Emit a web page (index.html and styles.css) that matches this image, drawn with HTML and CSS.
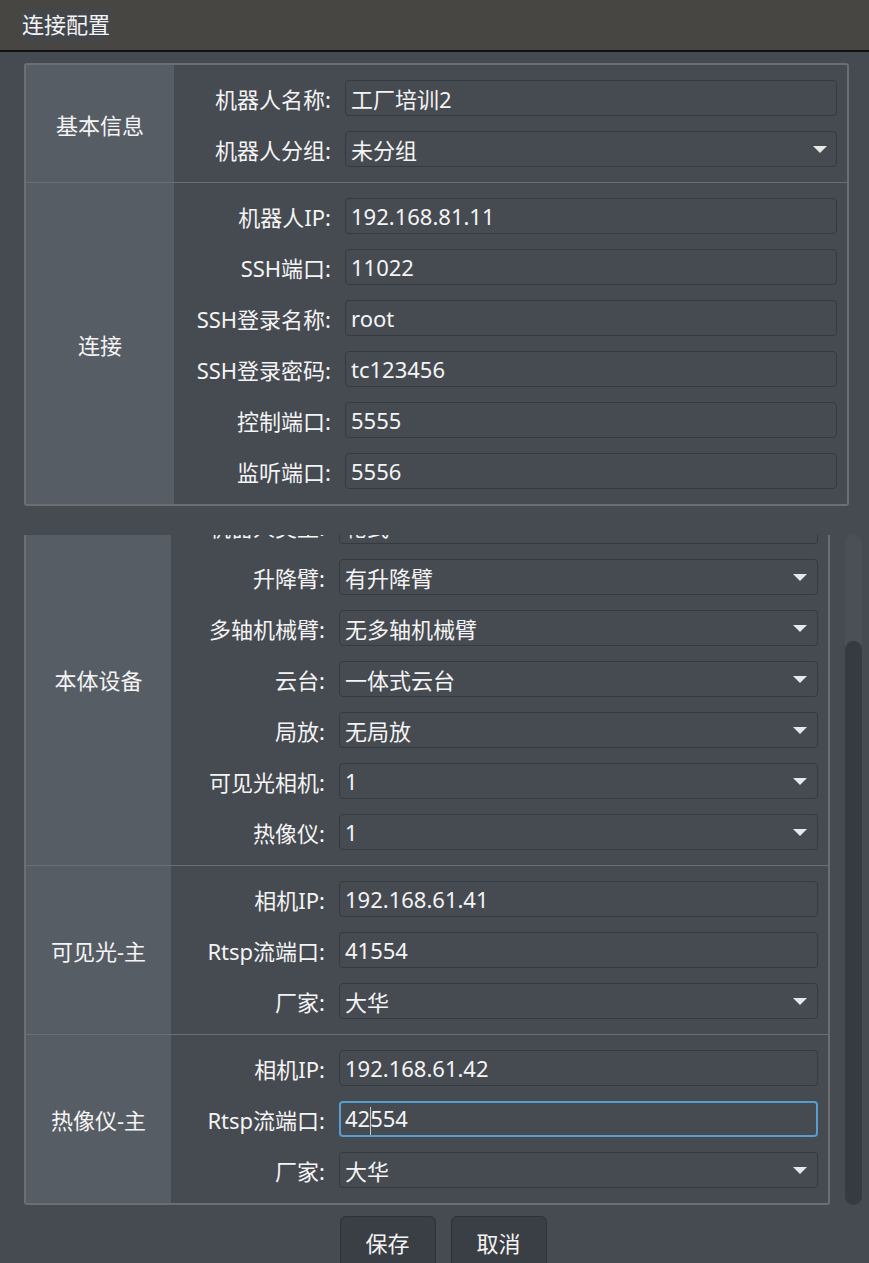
FILE: index.html
```html
<!DOCTYPE html>
<html lang="zh-CN">
<head>
  <meta charset="UTF-8" />
  <title>连接配置</title>
  <link rel="stylesheet" href="styles.css">
</head>
<body>
  <div class="titlebar"><span class="title">连接配置</span></div>

  <div class="main">
    <div class="group group-top">
      <div class="section">
        <div class="section-name">基本信息</div>
        <div class="form">
          <label>机器人名称:</label>
          <div class="field">工厂培训2</div>
          <label>机器人分组:</label>
          <div class="field select">未分组<svg class="arrow" viewBox="0 0 14 7"><path d="M0 0H14L7 7Z"/></svg></div>
        </div>
      </div>
      <div class="section">
        <div class="section-name">连接</div>
        <div class="form">
          <label>机器人IP:</label>
          <div class="field">192.168.81.11</div>
          <label>SSH端口:</label>
          <div class="field">11022</div>
          <label>SSH登录名称:</label>
          <div class="field">root</div>
          <label>SSH登录密码:</label>
          <div class="field">tc123456</div>
          <label>控制端口:</label>
          <div class="field">5555</div>
          <label>监听端口:</label>
          <div class="field">5556</div>
        </div>
      </div>
    </div>

    <div class="scroll-area">
      <div class="scroll-view" id="scrollView">
        <div class="group group-bottom">
          <div class="section">
            <div class="section-name">本体设备</div>
            <div class="form">
              <label>机器人类型:</label>
              <div class="field select">轮式<svg class="arrow" viewBox="0 0 14 7"><path d="M0 0H14L7 7Z"/></svg></div>
              <label>升降臂:</label>
              <div class="field select">有升降臂<svg class="arrow" viewBox="0 0 14 7"><path d="M0 0H14L7 7Z"/></svg></div>
              <label>多轴机械臂:</label>
              <div class="field select">无多轴机械臂<svg class="arrow" viewBox="0 0 14 7"><path d="M0 0H14L7 7Z"/></svg></div>
              <label>云台:</label>
              <div class="field select">一体式云台<svg class="arrow" viewBox="0 0 14 7"><path d="M0 0H14L7 7Z"/></svg></div>
              <label>局放:</label>
              <div class="field select">无局放<svg class="arrow" viewBox="0 0 14 7"><path d="M0 0H14L7 7Z"/></svg></div>
              <label>可见光相机:</label>
              <div class="field select">1<svg class="arrow" viewBox="0 0 14 7"><path d="M0 0H14L7 7Z"/></svg></div>
              <label>热像仪:</label>
              <div class="field select">1<svg class="arrow" viewBox="0 0 14 7"><path d="M0 0H14L7 7Z"/></svg></div>
            </div>
          </div>
          <div class="section">
            <div class="section-name">可见光-主</div>
            <div class="form">
              <label>相机IP:</label>
              <div class="field">192.168.61.41</div>
              <label>Rtsp流端口:</label>
              <div class="field">41554</div>
              <label>厂家:</label>
              <div class="field select">大华<svg class="arrow" viewBox="0 0 14 7"><path d="M0 0H14L7 7Z"/></svg></div>
            </div>
          </div>
          <div class="section">
            <div class="section-name">热像仪-主</div>
            <div class="form">
              <label>相机IP:</label>
              <div class="field">192.168.61.42</div>
              <label>Rtsp流端口:</label>
              <div class="field focused"><span>42<span class="caret"></span>554</span></div>
              <label>厂家:</label>
              <div class="field select">大华<svg class="arrow" viewBox="0 0 14 7"><path d="M0 0H14L7 7Z"/></svg></div>
            </div>
          </div>
        </div>
      </div>
      <div class="scrollbar"><div class="handle"></div></div>
    </div>

    <div class="buttons">
      <button class="btn">保存</button>
      <button class="btn btn-cancel">取消</button>
    </div>
  </div>

  <script>
    // the device list is scrolled down to the camera settings
    document.getElementById("scrollView").scrollTop = 45;
  </script>
</body>
</html>
```

FILE: styles.css
```css
body {
  margin: 0;
  height: 100vh;
  overflow: hidden;
  background-color: #464a51;
  color: #f4f4f4;
  font-family: "Noto Sans", "Noto Sans CJK SC", sans-serif;
  font-size: 22px;
}

.titlebar {
  height: 52px;
  background-color: #474643;
  border-bottom: 2px solid #111111;
  box-sizing: border-box;
  display: flex;
  align-items: center;
  padding-left: 22px;
}

.title {
  background-color: #43464b;
  padding: 1px 0 2px;
  line-height: 29px;
}

.main {
  padding: 11px 7px 0 24px;
}

.group {
  border: 2px solid #6c6f72;
  border-radius: 3px;
}

.group-top {
  margin-right: 13px;
}

.section {
  display: grid;
  grid-template-columns: 148px 1fr;
}

.section + .section {
  border-top: 1px solid #6c6f72;
}

.section-name {
  background-color: #575d64;
  display: flex;
  align-items: center;
  justify-content: center;
}

.form {
  display: grid;
  grid-template-columns: 157px 1fr;
  grid-auto-rows: 36px;
  column-gap: 14px;
  row-gap: 15px;
  padding: 15px 10px 15px 0;
}

.group-bottom .section {
  grid-template-columns: 145px 1fr;
}

.group-bottom .form {
  grid-template-columns: 154px 1fr;
}

.form label {
  display: flex;
  align-items: center;
  justify-content: flex-end;
  white-space: nowrap;
}

.field {
  display: flex;
  align-items: center;
  justify-content: space-between;
  border: 1px solid #353940;
  border-radius: 4px;
  padding: 0 9px 0 5px;
  white-space: nowrap;
}

.group-bottom .field {
  padding-right: 10px;
}

.arrow {
  width: 14px;
  height: 7px;
  fill: #e8e8e8;
}

.field.focused {
  border: 2px solid #569dd0;
  padding-left: 4px;
}

.caret {
  display: inline-block;
  width: 1px;
  height: 28px;
  margin: 0 -1px 0 0;
  vertical-align: middle;
  background-color: #c8c8c8;
}

/* lower part of the dialog lives in a scroll view */
.scroll-area {
  display: flex;
  gap: 15px;
  margin-top: 29px;
  height: 670px;
}

.scroll-view {
  width: 806px;
  overflow: hidden;
}

.scrollbar {
  width: 17px;
  background-color: #4b4f56;
  border-radius: 9px;
  display: flex;
  flex-direction: column;
  justify-content: flex-end;
}

.handle {
  height: 564px;
  background-color: #363a41;
  border-radius: 9px;
}

.buttons {
  display: flex;
  justify-content: center;
  gap: 15px;
  margin-top: 11px;
}

.btn {
  width: 96px;
  height: 54px;
  padding-bottom: 4px;
  background-color: #3a3e45;
  border: 1px solid #2e3238;
  border-radius: 6px;
  color: #f4f4f4;
  font-family: "Noto Sans", "Noto Sans CJK SC", sans-serif;
  font-size: 22px;
}
```
